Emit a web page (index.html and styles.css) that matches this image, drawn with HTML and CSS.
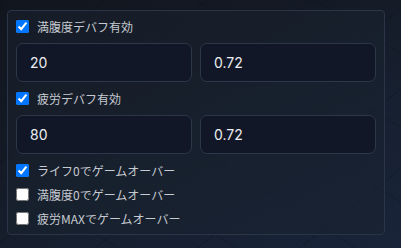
FILE: index.html
```html
<!DOCTYPE html>
<html lang="ja">
<head>
<meta charset="utf-8">
<link rel="stylesheet" href="styles.css">
</head>
<body>
<div class="page">
  <div class="panel">
    <label class="check-row"><input type="checkbox" checked><span>満腹度デバフ有効</span></label>
    <div class="input-row">
      <input class="field" type="text" value="20">
      <input class="field" type="text" value="0.72">
    </div>
    <label class="check-row"><input type="checkbox" checked><span>疲労デバフ有効</span></label>
    <div class="input-row">
      <input class="field" type="text" value="80">
      <input class="field" type="text" value="0.72">
    </div>
    <div class="check-list">
      <label class="check-row"><input type="checkbox" checked><span>ライフ0でゲームオーバー</span></label>
      <label class="check-row"><input type="checkbox"><span>満腹度0でゲームオーバー</span></label>
      <label class="check-row"><input type="checkbox"><span>疲労MAXでゲームオーバー</span></label>
    </div>
  </div>
</div>
</body>
</html>
```
FILE: styles.css
```css
html, body {
  margin: 0;
  padding: 0;
}
body {
  width: 401px;
  height: 248px;
  overflow: hidden;
  background-color: #151c28;
  background-image:
    repeating-linear-gradient(32deg, transparent 0 62px, rgba(8, 12, 20, 0.22) 62px 63px),
    repeating-linear-gradient(-38deg, transparent 0 62px, rgba(8, 12, 20, 0.22) 62px 63px),
    linear-gradient(155deg, #11161e 0%, #141a25 35%, #172030 65%, #19243a 100%);
  font-family: "Noto Sans CJK JP", "Noto Sans", sans-serif;
}
.page {
  padding: 10px 16px 0 7px;
}
.panel {
  box-sizing: border-box;
  width: 378px;
  height: 225px;
  border: 1px solid #2a3547;
  border-radius: 4px;
  background: rgba(26, 34, 48, 0.55);
  padding: 3.5px 8px 0 8px;
  display: flex;
  flex-direction: column;
}
.check-row {
  height: 24px;
  display: flex;
  align-items: center;
  gap: 8px;
  font-size: 12px;
  color: #c6cad1;
  line-height: 1;
}
.check-row input {
  margin: 0;
  width: 13px;
  height: 13px;
  flex: none;
}
.input-row {
  display: grid;
  grid-template-columns: 1fr 1fr;
  gap: 8px;
  margin: 4.5px 0;
}
.field {
  box-sizing: border-box;
  height: 39px;
  width: 100%;
  border: 1px solid #2c3748;
  border-radius: 7px;
  background: #111726;
  color: #eceef2;
  font-family: Inter, "Noto Sans", sans-serif;
  font-size: 14px;
  padding: 0 0 0 13px;
  outline: none;
}
.check-list {
  display: flex;
  flex-direction: column;
}
```
